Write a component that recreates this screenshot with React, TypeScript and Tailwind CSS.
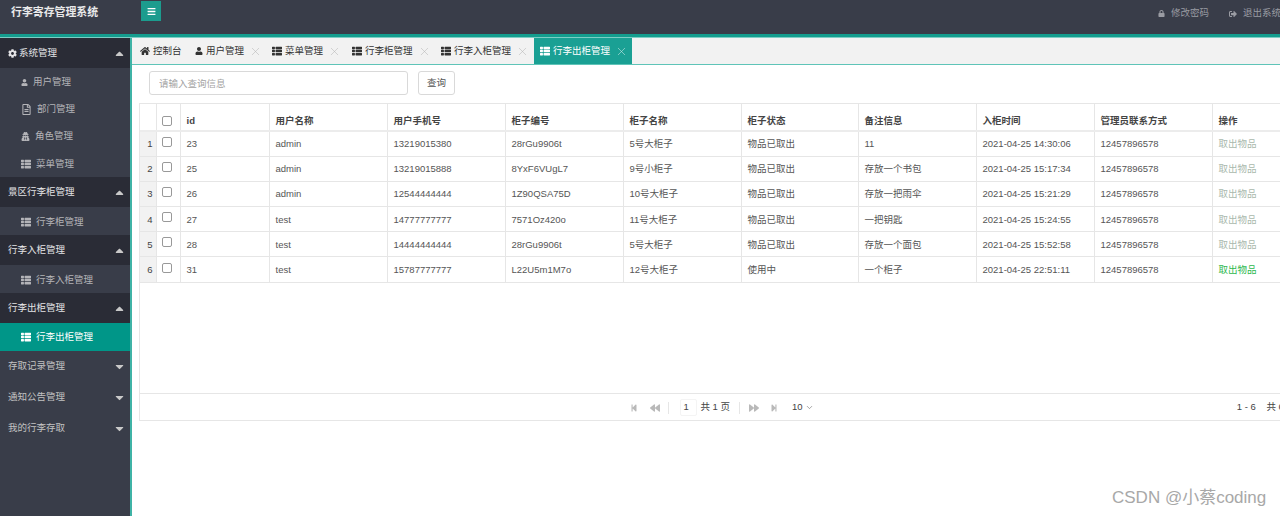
import type { ReactNode } from "react";
import {
  FaBackward,
  FaBars,
  FaCaretDown,
  FaCaretUp,
  FaCog,
  FaForward,
  FaHome,
  FaLock,
  FaRegFileAlt,
  FaSignOutAlt,
  FaStepBackward,
  FaStepForward,
  FaThList,
  FaUser,
  FaUserSecret,
} from "react-icons/fa";
import { ChevronDown, X } from "lucide-react";

const FONT = "font-['Liberation_Sans','Noto_Sans_CJK_SC',sans-serif]";

const columns = [
  { label: "id", w: "w-[89px]" },
  { label: "用户名称", w: "w-[118px]" },
  { label: "用户手机号", w: "w-[118px]" },
  { label: "柜子编号", w: "w-[118px]" },
  { label: "柜子名称", w: "w-[118px]" },
  { label: "柜子状态", w: "w-[117px]" },
  { label: "备注信息", w: "w-[118px]" },
  { label: "入柜时间", w: "w-[118px]" },
  { label: "管理员联系方式", w: "w-[118px]" },
  { label: "操作", w: "" },
];

const rows = [
  ["23", "admin", "13219015380", "28rGu9906t", "5号大柜子", "物品已取出", "11", "2021-04-25 14:30:06", "12457896578"],
  ["25", "admin", "13219015888", "8YxF6VUgL7", "9号小柜子", "物品已取出", "存放一个书包", "2021-04-25 15:17:34", "12457896578"],
  ["26", "admin", "12544444444", "1Z90QSA75D", "10号大柜子", "物品已取出", "存放一把雨伞", "2021-04-25 15:21:29", "12457896578"],
  ["27", "test", "14777777777", "7571Oz420o", "11号大柜子", "物品已取出", "一把钥匙", "2021-04-25 15:24:55", "12457896578"],
  ["28", "test", "14444444444", "28rGu9906t", "5号大柜子", "物品已取出", "存放一个面包", "2021-04-25 15:52:58", "12457896578"],
  ["31", "test", "15787777777", "L22U5m1M7o", "12号大柜子", "使用中", "一个柜子", "2021-04-25 22:51:11", "12457896578"],
];

function GroupTitle({ title, open, icon, height = "h-[30px]", first }: { title: string; open?: boolean; icon?: ReactNode; height?: string; first?: boolean }) {
  return (
    <div
      className={`flex items-center justify-between pl-2 pr-[4px] ${height} ${first ? "" : "pt-[1px]"} ${
        open ? "bg-[#2a2c36] text-[#e4e4e6]" : "text-[#c2c2c2]"
      }`}
    >
      <span className="flex items-center gap-[2px]">
        {icon}
        {title}
      </span>
      {open ? <FaCaretUp size={13} className="text-[#c9c9c9]" /> : <FaCaretDown size={13} className="text-[#c9c9c9]" />}
    </div>
  );
}

function SubItem({ title, icon, active, height = "h-[27px]" }: { title: string; icon: ReactNode; active?: boolean; height?: string }) {
  return (
    <div className={`flex items-center gap-[5px] pl-[21px] ${height} ${active ? "bg-[#009688] text-white" : "pt-[2px] text-[#b4b4b8]"}`}>
      {icon}
      {title}
    </div>
  );
}

function Tab({ title, icon, closable = true, active, w }: { title: string; icon: ReactNode; closable?: boolean; active?: boolean; w: string }) {
  return (
    <div className={`flex h-full shrink-0 items-center whitespace-nowrap ${w} ${active ? "bg-[#1aa094] pl-[6px] text-white" : "pl-[8px] text-[#333]"}`}>
      <span className="mr-[3px] flex">{icon}</span>
      <span>{title}</span>
      {closable && <X size={13} strokeWidth={1} className={`ml-[5px] ${active ? "text-[#d5efec]" : "text-[#b5b5b5]"}`} />}
    </div>
  );
}

export default function App() {
  return (
    <div className={`relative flex h-[516px] w-[1280px] flex-col overflow-hidden bg-white text-[9.5px] ${FONT}`}>
      <header className="flex h-[34px] shrink-0 bg-[#393d49]">
        <div className="w-[141px] pl-[11px] pt-[5px] text-[10.9px] leading-[15px] font-bold text-[#e9e9ea]">行李寄存管理系统</div>
        <button type="button" className="mt-[1px] flex h-[20px] w-[20px] items-center justify-center bg-[#1c9c8e] text-white">
          <FaBars size={9} />
        </button>
        <div className="ml-auto flex h-[27px] w-[122px] items-center gap-[20px] whitespace-nowrap text-[#9a9ca3]">
          <span className="flex items-center gap-[6px]">
            <FaLock size={7} />
            修改密码
          </span>
          <span className="flex items-center gap-[6px]">
            <FaSignOutAlt size={8} />
            退出系统
          </span>
        </div>
      </header>
      <div className="h-[3px] shrink-0 bg-[#149d8e]" />
      <div className="h-px shrink-0 bg-[#7fcdc4]" />

      <div className="flex min-h-0 flex-1">
        <aside className="w-[130px] shrink-0 bg-[#393d49]">
          <GroupTitle title="系统管理" open first icon={<FaCog size={9} className="text-[#e4e4e6]" />} />
          <SubItem title="用户管理" icon={<FaUser size={7} />} />
          <SubItem title="部门管理" icon={<FaRegFileAlt size={11} />} />
          <SubItem title="角色管理" icon={<FaUserSecret size={9} />} />
          <SubItem title="菜单管理" icon={<FaThList size={10} />} height="h-[28px]" />
          <GroupTitle title="景区行李柜管理" open />
          <SubItem title="行李柜管理" icon={<FaThList size={10} />} height="h-[28px]" />
          <GroupTitle title="行李入柜管理" open />
          <SubItem title="行李入柜管理" icon={<FaThList size={10} />} height="h-[28px]" />
          <GroupTitle title="行李出柜管理" open />
          <SubItem title="行李出柜管理" icon={<FaThList size={10} />} active height="h-[28px]" />
          <GroupTitle title="存取记录管理" />
          <GroupTitle title="通知公告管理" height="h-[31px]" />
          <GroupTitle title="我的行李存取" height="h-[31px]" />
        </aside>
        <div className="w-[2px] shrink-0 bg-[#3fb3a6]" />

        <main className="min-w-0 flex-1">
          <div className="flex h-[27px] border-b border-[#5fc4b8] bg-[#f2f2f2]">
            <Tab title="控制台" icon={<FaHome size={10} />} closable={false} w="w-[55px]" />
            <Tab title="用户管理" icon={<FaUser size={8} />} w="w-[77px]" />
            <Tab title="菜单管理" icon={<FaThList size={10} />} w="w-[80px]" />
            <Tab title="行李柜管理" icon={<FaThList size={10} />} w="w-[89px]" />
            <Tab title="行李入柜管理" icon={<FaThList size={10} />} w="w-[101px]" />
            <Tab title="行李出柜管理" icon={<FaThList size={10} />} active w="w-[98px]" />
          </div>

          <div className="flex gap-[10px] pl-[17px] pt-[6px]">
            <input
              placeholder="请输入查询信息"
              readOnly
              className="h-[24px] w-[259px] rounded-[3px] border border-[#d9d9d9] pl-[9px] outline-none placeholder:text-[#a3a3a3]"
            />
            <button type="button" className="h-[24px] w-[37px] rounded-[3px] border border-[#d9d9d9] text-[#555]">
              查询
            </button>
          </div>

          <div className="ml-[7px] mt-[8px] flex h-[318px] w-[1164px] flex-col border border-[#e6e6e6]">
            <div className="min-h-0 flex-1">
              <table className="w-full table-fixed border-collapse text-left text-[#555]">
                <thead>
                  <tr className="h-[27px] border-b-2 border-[#ececec]">
                    <th className="w-[16px] border-r border-[#e6e6e6] p-0" />
                    <th className="w-[24px] border-r border-[#e6e6e6] p-0 pt-[8px]">
                      <span className="ml-[5px] block h-[10px] w-[10px] rounded-[2px] border border-[#999] bg-white" />
                    </th>
                    {columns.map((c) => (
                      <th key={c.label} className={`${c.w} border-r border-[#e6e6e6] pb-0 pl-[6px] pt-[8px] font-bold text-[#444] last:border-r-0`}>
                        {c.label}
                      </th>
                    ))}
                  </tr>
                </thead>
                <tbody>
                  {rows.map((row, i) => (
                    <tr key={row[0]} className="h-[25.2px] border-b border-[#e6e6e6]">
                      <td className="border-r border-[#e6e6e6] bg-[#f2f2f2] pr-[3px] pt-[1px] text-right text-[#444]">{i + 1}</td>
                      <td className="border-r border-[#e6e6e6] p-0">
                        <span className="mb-[4px] ml-[5px] block h-[10px] w-[10px] rounded-[2px] border border-[#999] bg-white" />
                      </td>
                      {row.map((cell, j) => (
                        <td key={j} className="border-r border-[#e6e6e6] pb-0 pl-[6px] pt-[1px]">
                          {cell}
                        </td>
                      ))}
                      <td className={`pb-0 pl-[6px] pt-[1px] ${row[5] === "使用中" ? "text-[#2db84d]" : "text-[#a9b8ac]"}`}>取出物品</td>
                    </tr>
                  ))}
                </tbody>
              </table>
            </div>

            <div className="grid h-[27px] shrink-0 grid-cols-[1fr_auto_1fr] items-center border-t border-[#e6e6e6] pt-[1px] text-[#444]">
              <span />
              <div className="flex items-center pl-[2px] text-[#b9b9b9]">
                <FaStepBackward size={8} />
                <FaBackward size={10} className="ml-[12px]" />
                <span className="ml-[8px] h-[12px] w-px bg-[#e6e6e6]" />
                <span className="ml-[11px] w-[17px] rounded-[2px] border border-[#f4f4f4] pl-[2px] text-[#444]">1</span>
                <span className="ml-[3px] text-[#444]">共 1 页</span>
                <span className="ml-[9px] h-[12px] w-px bg-[#e6e6e6]" />
                <FaForward size={10} className="ml-[9px]" />
                <FaStepForward size={8} className="ml-[11px]" />
                <span className="ml-[14px] flex items-center gap-[2px] text-[#444]">
                  10
                  <ChevronDown size={9} strokeWidth={1.25} />
                </span>
              </div>
              <span className="pr-[6px] text-right">1 - 6 &nbsp; &nbsp;共 6 条</span>
            </div>
          </div>
        </main>
      </div>

      <div className="absolute left-[1112px] top-[487px] text-[17px] leading-[22px] text-[#a8a8a8]">CSDN @小蔡coding</div>
    </div>
  );
}
